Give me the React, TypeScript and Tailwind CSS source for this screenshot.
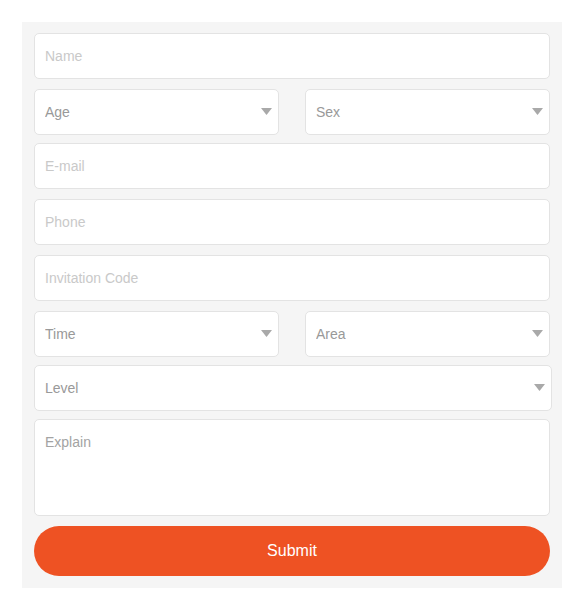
import { useState } from 'react'

const field =
  'block w-full h-[46px] rounded-[5px] border border-[#e3e3e3] bg-white px-[10px] text-[14px] text-[#666] outline-none placeholder:text-[#c9c9c9]'

function Select({ label, className = '' }: { label: string; className?: string }) {
  return (
    <div className={`relative ${className}`}>
      <select
        defaultValue=""
        className="block w-full h-[46px] appearance-none rounded-[5px] border border-[#e3e3e3] bg-white px-[10px] text-[14px] text-[#999] outline-none"
      >
        <option value="" disabled>
          {label}
        </option>
      </select>
      <svg
        className="pointer-events-none absolute right-[7px] top-[19px]"
        width="11"
        height="7"
        viewBox="0 0 11 7"
      >
        <path d="M0 0H11L5.5 7Z" fill="#a9a9a9" />
      </svg>
    </div>
  )
}

export default function App() {
  const [explain, setExplain] = useState('')

  return (
    <div className="min-h-screen bg-white pt-[22px] pl-[22px] font-['Liberation_Sans',Arial,sans-serif]">
      <form
        className="w-[540px] bg-[#f5f5f5] px-[12px] pt-[11px] pb-[12px]"
        onSubmit={(e) => e.preventDefault()}
      >
        <input className={field} placeholder="Name" />

        <div className="mt-[10px] flex gap-[26px]">
          <Select label="Age" className="flex-1" />
          <Select label="Sex" className="flex-1" />
        </div>

        <input className={`${field} mt-[8px]`} placeholder="E-mail" />
        <input className={`${field} mt-[10px]`} placeholder="Phone" />
        <input className={`${field} mt-[10px]`} placeholder="Invitation Code" />

        <div className="mt-[10px] flex gap-[26px]">
          <Select label="Time" className="flex-1" />
          <Select label="Area" className="flex-1" />
        </div>

        <Select label="Level" className="mt-[8px] w-[518px]" />

        <textarea
          value={explain}
          onChange={(e) => setExplain(e.target.value)}
          placeholder="Explain"
          className="mt-[8px] block h-[97px] w-full resize-none rounded-[5px] border border-[#e3e3e3] bg-white px-[10px] py-[12px] text-[14px] text-[#666] outline-none placeholder:text-[#a3a3a3]"
        />

        <button
          type="submit"
          className="mt-[10px] block h-[50px] w-full rounded-full bg-[#ee5223] text-[16px] text-white"
        >
          Submit
        </button>
      </form>
    </div>
  )
}
